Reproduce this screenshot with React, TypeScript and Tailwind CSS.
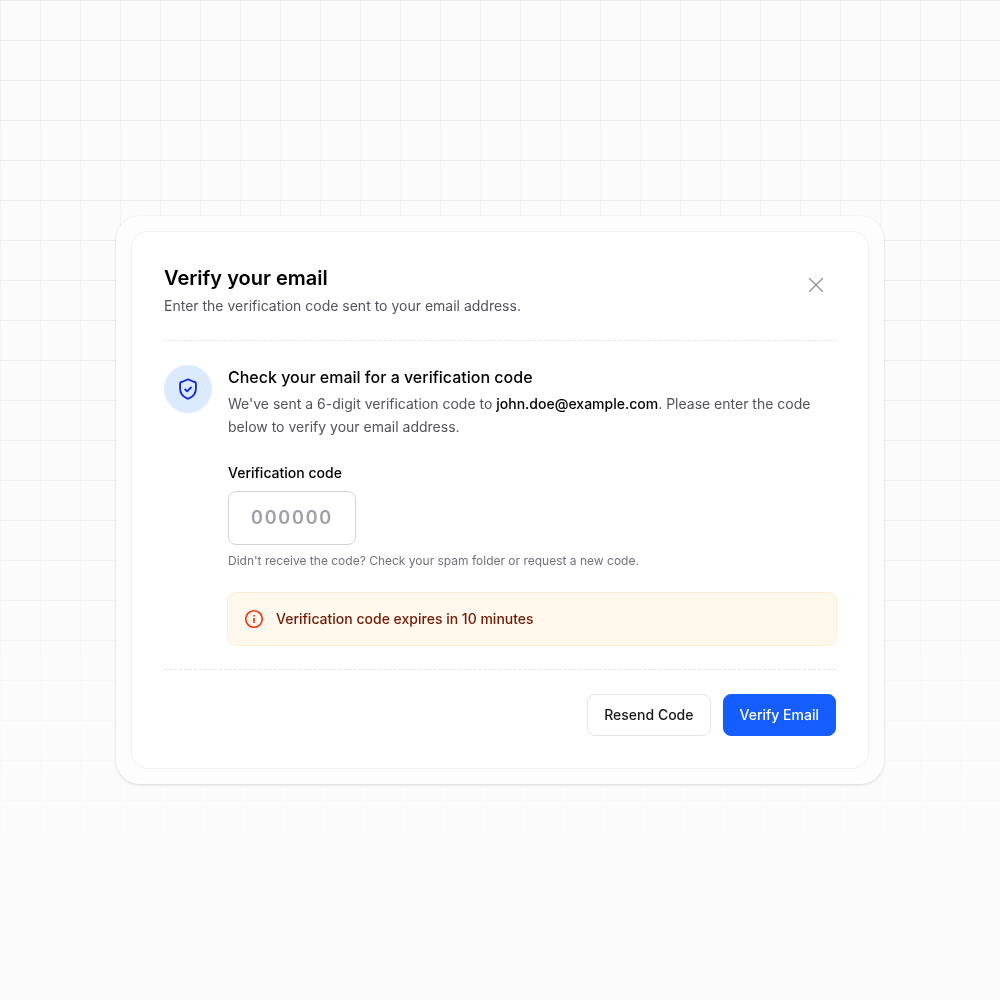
import { X } from 'lucide-react';

function ShieldIcon() {
  return (
    <svg viewBox="0 0 24 24" fill="none" stroke="currentColor" strokeWidth="1.8" strokeLinecap="round" strokeLinejoin="round" className="h-6 w-6">
      <path d="M12 2.300c-.8 0-3.300 2-6.500 2.700-.9.200-1.400.6-1.400 1.600v5c0 5.200 3.100 8.300 6.900 9.800.7.270 1.300.27 2 0 3.800-1.500 6.900-4.600 6.900-9.800v-5c0-1-.5-1.400-1.400-1.600-3.200-.7-5.700-2.700-6.500-2.700z" />
      <path d="m9.200 12.500 1.900 1.900 3.900-3.900" />
    </svg>
  );
}

function InfoIcon() {
  return (
    <svg viewBox="0 0 20 20" fill="none" stroke="currentColor" strokeWidth="1.6" className="h-5 w-5 shrink-0">
      <circle cx="10" cy="10" r="8.300" />
      <path d="M10 9v5M10 6v1.500" />
    </svg>
  );
}

export default function App() {
  return (
    <div className="relative isolate flex h-screen items-center justify-center overflow-hidden bg-[#fbfbfb] font-[Inter,sans-serif]">
      <div className="absolute inset-0 -z-10 bg-[linear-gradient(to_bottom,#e9e9e9_1px,transparent_1px),linear-gradient(to_right,#f1f1f1_1px,transparent_1px)] mask-[linear-gradient(to_bottom,#000_10%,transparent_92%)] bg-[size:40px_40px]" />

      <div className="w-[768px] rounded-3xl bg-white/60 p-4 shadow-[0_1px_3px_rgba(0,0,0,0.14),0_0_1px_rgba(0,0,0,0.08)] backdrop-blur-[2px]">
        <div className="rounded-2xl bg-white p-8 ring-1 ring-[#f0f0f0]">
          <div className="flex items-start justify-between border-b border-dashed border-zinc-200 pb-6">
            <div>
              <h2 className="text-xl font-semibold text-black">Verify your email</h2>
              <p className="mt-1 text-sm text-zinc-600">
                Enter the verification code sent to your email address.
              </p>
            </div>
            <button className="mt-2 mr-[7px] text-[#8c8c96]" aria-label="Close">
              <X className="h-[26px] w-[26px]" strokeWidth={1.1} />
            </button>
          </div>

          <div className="flex gap-4 py-6">
            <div className="flex h-12 w-12 shrink-0 items-center justify-center rounded-full bg-blue-100 text-[#0d25dc]">
              <ShieldIcon />
            </div>
            <div className="flex-1">
              <h3 className="text-base font-medium text-black">Check your email for a verification code</h3>
              <p className="mt-1 text-sm leading-relaxed text-zinc-600">
                We've sent a 6-digit verification code to{' '}
                <span className="font-medium text-black">john.doe@example.com</span>. Please enter the code below to
                verify your email address.
              </p>
              <label htmlFor="code" className="mt-6 block text-sm font-medium text-black">
                Verification code
              </label>
              <input
                id="code"
                placeholder="000000"
                maxLength={6}
                className="mt-2 block h-[54px] w-32 rounded-lg border border-zinc-300 text-center text-lg font-semibold tracking-[0.1em] placeholder:text-zinc-400"
              />
              <p className="mt-2 text-xs text-zinc-500">
                Didn't receive the code? Check your spam folder or request a new code.
              </p>
              <div className="mt-6 flex items-center gap-3 rounded-lg bg-[#fff8ec] p-4 text-sm font-medium text-[#701a06] ring-1 ring-[#ffecd4]">
                <span className="text-[#f72c0a]">
                  <InfoIcon />
                </span>
                Verification code expires in 10 minutes
              </div>
            </div>
          </div>

          <div className="flex justify-end gap-3 border-t border-dashed border-zinc-200 pt-6">
            <button className="h-[42px] rounded-lg border border-zinc-200 px-4 text-sm font-medium text-zinc-900">
              Resend Code
            </button>
            <button className="h-[42px] rounded-lg border border-blue-600 bg-blue-600 px-4 text-sm font-medium text-white">
              Verify Email
            </button>
          </div>
        </div>
      </div>
    </div>
  );
}
